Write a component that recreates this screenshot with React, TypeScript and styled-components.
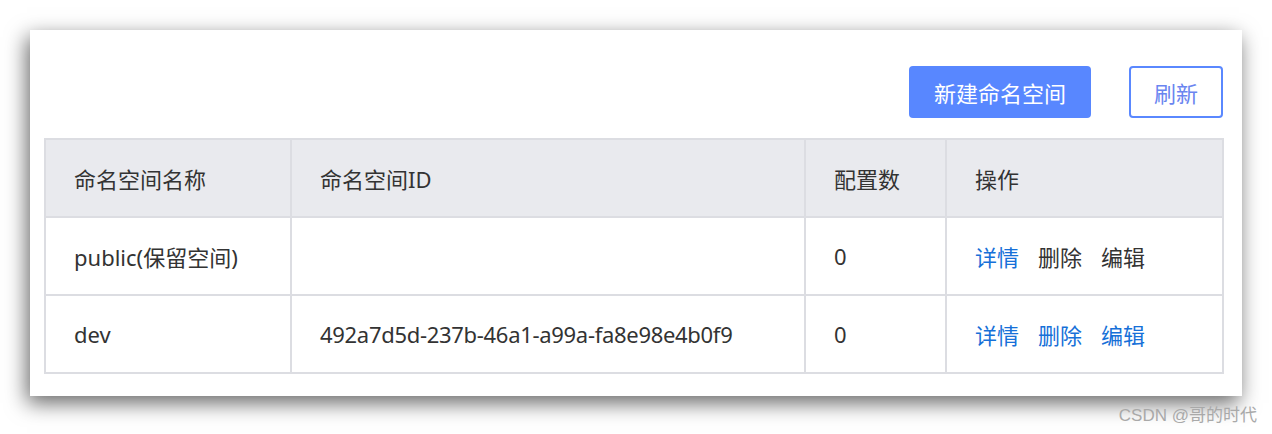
import styled, { createGlobalStyle } from 'styled-components';

type Row = {
	name: string;
	id: string;
	count: number;
	reserved?: boolean;
}

type LinkProps = {
	muted?: boolean;
}

type CellProps = {
	mono?: boolean;
}

const rows: Row[] = [
	{ name: 'public(保留空间)', id: '', count: 0, reserved: true },
	{ name: 'dev', id: '492a7d5d-237b-46a1-a99a-fa8e98e4b0f9', count: 0 },
];

const columns = [
	{ title: '命名空间名称', width: 246 },
	{ title: '命名空间ID', width: 514 },
	{ title: '配置数', width: 141 },
	{ title: '操作', width: 277 },
];

export default function App() {
	return (
		<Page>
			<GlobalStyle />
			<Card>
				<Toolbar>
					<PrimaryButton>新建命名空间</PrimaryButton>
					<GhostButton>刷新</GhostButton>
				</Toolbar>
				<Table>
					<colgroup>
						{columns.map(c => <col key={c.title} style={{ width: c.width }} />)}
					</colgroup>
					<thead>
						<tr>
							{columns.map(c => <HeadCell key={c.title}>{c.title}</HeadCell>)}
						</tr>
					</thead>
					<tbody>
						{rows.map(r => (
							<tr key={r.name}>
								<Cell>{r.name}</Cell>
								<Cell mono>{r.id}</Cell>
								<Cell>{r.count}</Cell>
								<Cell>
									<Actions>
										<ActionLink>详情</ActionLink>
										{/* 保留空间不能删除/编辑，所以是灰色 */}
										<ActionLink muted={r.reserved}>删除</ActionLink>
										<ActionLink muted={r.reserved}>编辑</ActionLink>
									</Actions>
								</Cell>
							</tr>
						))}
					</tbody>
				</Table>
			</Card>
			<Watermark>CSDN @哥的时代</Watermark>
		</Page>
	);
}

const GlobalStyle = createGlobalStyle`
	body {
		margin: 0;
		background: #fff;
		font-family: "Noto Sans", "Noto Sans CJK SC", sans-serif;
	}
`;

const Page = styled.div`
	width: 1272px;
	height: 434px;
	padding: 30px 30px 0;
	box-sizing: border-box;
	overflow: hidden;
`;

const Card = styled.div`
	background: #fff;
	padding: 36px 19px 22px 14px;
	box-shadow: -3px 7px 20px rgba(0, 0, 0, 0.6);
`;

const Toolbar = styled.div`
	display: flex;
	justify-content: flex-end;
	gap: 38px;
	margin-bottom: 20px;
`;

const PrimaryButton = styled.button`
	height: 52px;
	width: 182px;
	border: none;
	border-radius: 4px;
	background: #5887ff;
	color: #fff;
	font-family: inherit;
	font-size: 22px;
	cursor: pointer;
`;

const GhostButton = styled.button`
	height: 52px;
	width: 94px;
	border: 2px solid #5a88ff;
	border-radius: 4px;
	background: #fff;
	color: #6a85f0;
	font-family: inherit;
	font-size: 22px;
	cursor: pointer;
`;

const Table = styled.table`
	width: 100%;
	table-layout: fixed;
	border-collapse: collapse;
	border: 2px solid #dcdde2;
`;

const HeadCell = styled.th`
	height: 76px;
	padding: 0 0 0 28px;
	background: #e9eaee;
	border: 2px solid #dcdde2;
	text-align: left;
	font-weight: normal;
	font-size: 22px;
	color: #333;
`;

const Cell = styled.td<CellProps>`
	height: 76px;
	padding: 0 0 0 28px;
	border: 2px solid #dcdde2;
	font-size: 22px;
	letter-spacing: ${props => (props.mono ? '-0.3px' : 'normal')};
	color: #333;
	white-space: nowrap;
`;

const Actions = styled.div`
	display: flex;
	gap: 19px;
`;

const ActionLink = styled.span<LinkProps>`
	color: ${props => (props.muted ? '#333' : '#1670d8')};
	cursor: pointer;
`;

const Watermark = styled.div`
	text-align: right;
	margin: 5px -15px 0 0;
	font-size: 17px;
	color: #a9a9a9;
	font-family: "Liberation Sans", "Noto Sans CJK SC", sans-serif;
`;
